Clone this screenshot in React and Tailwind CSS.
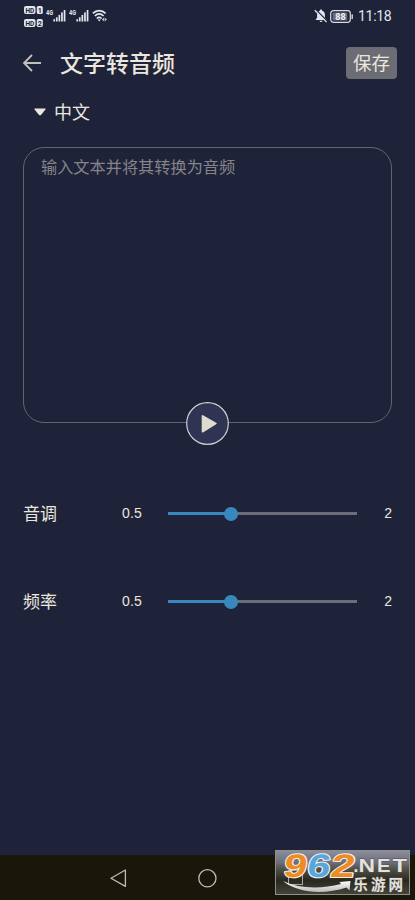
import React from 'react';

const SimSignal = () => (
  <svg width="21" height="14" viewBox="0 0 21 14" fill="#e4e6ee">
    <text x="0" y="6" fontSize="7" fontWeight="700" fontFamily="Roboto, sans-serif" textLength="7" lengthAdjust="spacingAndGlyphs">4G</text>
    <rect x="7.4" y="10.2" width="1.6" height="2.3" />
    <rect x="9.9" y="8.3" width="1.7" height="4.2" />
    <rect x="12.5" y="5.9" width="1.7" height="6.6" />
    <rect x="15.1" y="3.4" width="1.7" height="9.1" />
    <rect x="17.7" y="1" width="1.7" height="11.5" />
  </svg>
);

const HdBadge = ({ sim }) => (
  <svg width="20" height="8" viewBox="0 0 20 8">
    <rect x="0" y="0" width="11.5" height="8" rx="2" fill="#e4e6ee" />
    <rect x="12.8" y="0" width="6" height="8" rx="1.6" fill="#e4e6ee" />
    <text x="1.4" y="6.6" fontSize="7.2" fontWeight="700" fontFamily="Roboto, sans-serif" fill="#1f2339" textLength="8.8" lengthAdjust="spacingAndGlyphs">HD</text>
    <text x="15.8" y="6.6" fontSize="7.2" fontWeight="700" fontFamily="Roboto, sans-serif" fill="#1f2339" textAnchor="middle">{sim}</text>
  </svg>
);

const WifiIcon = () => (
  <svg width="16" height="14" viewBox="0 0 16 14" fill="none" stroke="#e4e6ee" strokeWidth="1.7">
    <path d="M0.8 4.3C4.6 0.6 9.8 0.6 13.6 4.3" />
    <path d="M2.8 7C5.5 4.4 8.9 4.4 11.6 7" />
    <path d="M4.8 9.5C6.4 8 8 8 9.6 9.5" />
    <path d="M5.6 10.6L7.2 12.6L8.8 10.6Z" fill="#e4e6ee" stroke="none" />
    <path d="M12.1 8.6L9.8 10.5L12.1 12.4ZM12.7 8.6L15 10.5L12.7 12.4Z" fill="#b9bcc9" stroke="none" />
  </svg>
);

const BellOffIcon = () => (
  <svg width="14" height="14" viewBox="0 0 14 14">
    <path d="M7 0.6C7.7 0.6 8.1 1 8.1 1.7C10 2.2 10.9 3.7 10.9 5.7V8.8L12.3 10.5V11H1.7V10.5L3.1 8.8V5.7C3.1 3.7 4 2.2 5.9 1.7C5.9 1 6.3 0.6 7 0.6Z" fill="#e4e6ee" />
    <path d="M5.6 11.8H8.4C8.2 13.5 5.8 13.5 5.6 11.8Z" fill="#e4e6ee" />
    <path d="M1.8 0.7L13.3 12.2" stroke="#1f2339" strokeWidth="1.5" />
    <path d="M0.8 1.3L12.6 13.1" stroke="#e4e6ee" strokeWidth="1.3" />
  </svg>
);

const BatteryIcon = () => (
  <svg width="24" height="13" viewBox="0 0 24 13">
    <rect x="0.7" y="0.7" width="19.6" height="11.6" rx="2.8" fill="none" stroke="#d9dbe3" strokeWidth="1.2" />
    <rect x="2.6" y="2.4" width="14.6" height="8.2" rx="0.8" fill="#6b6e80" />
    <rect x="21.5" y="4.2" width="1.4" height="4.8" rx="0.6" fill="#d9dbe3" />
    <text x="10.4" y="9.8" fontSize="9" fontWeight="700" fontFamily="Roboto, sans-serif" fill="#f1f2f6" textAnchor="middle">88</text>
  </svg>
);

const StatusBar = () => (
  <div className="flex h-8 shrink-0 items-center justify-between pl-[24px] pr-[23px]">
    <div className="flex items-center">
      <div className="flex w-[22px] flex-col gap-[5px]">
        <HdBadge sim="1" />
        <HdBadge sim="2" />
      </div>
      <div className="flex items-center gap-[2px]">
        <SimSignal />
        <SimSignal />
        <WifiIcon />
      </div>
    </div>
    <div className="flex items-center">
      <BellOffIcon />
      <div className="ml-[2px]">
        <BatteryIcon />
      </div>
      <span className="ml-[4px] w-[34px] whitespace-nowrap font-['Roboto',sans-serif] text-[14px] leading-none tracking-[-0.3px] text-[#e4e6ee]">11:18</span>
    </div>
  </div>
);

const SliderRow = ({ label, min, max, percent }) => (
  <div className="flex h-[30px] items-center">
    <span className="w-[99px] pb-[2px] text-[17px] leading-none">{label}</span>
    <span className="w-[46px] font-['Liberation_Sans',sans-serif] text-[14px] leading-none tracking-[0.2px]">{min}</span>
    <div className="relative mt-px h-[3px] w-[189px] bg-[#6d6c78]">
      <div className="h-full bg-[#3888bd]" style={{ width: `${percent}%` }}></div>
      <div
        className="absolute top-1/2 size-[14px] -translate-x-1/2 -translate-y-1/2 rounded-full bg-[#3888bd]"
        style={{ left: `${percent}%` }}
      ></div>
    </div>
    <span className="flex-1 text-right font-['Liberation_Sans',sans-serif] text-[14px] leading-none">{max}</span>
  </div>
);

const SiteBadge = () => (
  <svg className="absolute right-[5px] bottom-[5px] overflow-visible" width="135" height="45" viewBox="0 0 135 45">
    <defs>
      <linearGradient id="badgeBg" x1="0" y1="0" x2="0" y2="1">
        <stop offset="0" stopColor="#8d8fa0" />
        <stop offset="0.28" stopColor="#6b6d7b" />
        <stop offset="0.4" stopColor="#55544d" />
        <stop offset="0.68" stopColor="#2a281e" />
        <stop offset="1" stopColor="#45443c" />
      </linearGradient>
      <linearGradient id="smile" x1="0" y1="0" x2="0" y2="1">
        <stop offset="0" stopColor="#ffffff" />
        <stop offset="1" stopColor="#b9b9b7" />
      </linearGradient>
    </defs>
    <rect x="0.5" y="0.5" width="134" height="44" fill="url(#badgeBg)" stroke="#8f9088" />
    <rect x="13.5" y="20.5" width="14" height="14" fill="none" stroke="#aaa69b" />
    <g transform="translate(0 27) skewX(-9)" fontFamily="'Liberation Sans', sans-serif" fontWeight="700" fontSize="32.5" stroke="#f4f1ec" strokeWidth="2" strokeLinejoin="round" paintOrder="stroke">
      <text x="7.5" y="0" fill="#ee8b22" textLength="23" lengthAdjust="spacingAndGlyphs">9</text>
      <text x="31" y="0" fill="#58a7dc" textLength="23" lengthAdjust="spacingAndGlyphs">6</text>
      <text x="54.5" y="0" fill="#ee8b22" textLength="24" lengthAdjust="spacingAndGlyphs">2</text>
    </g>
    <path d="M8 31C25 39 46 39 66 34L64.5 32L75.5 31L74.5 40.5L71.5 37.5C50 44.5 24 44 8 31Z" fill="url(#smile)" />
    <g fill="#e3e2df" stroke="#55534c" strokeWidth="0.8" paintOrder="stroke">
      <g fontFamily="'Liberation Sans', sans-serif" fontWeight="700" fontSize="17.5">
        <text x="78.5" y="22.3">.</text>
        <text x="83.5" y="22.3" textLength="16.5" lengthAdjust="spacingAndGlyphs">N</text>
        <text x="102" y="22.3" textLength="13.5" lengthAdjust="spacingAndGlyphs">E</text>
        <text x="117.5" y="22.3" textLength="14.5" lengthAdjust="spacingAndGlyphs">T</text>
      </g>
      <text x="78.3 96 113.5" y="39.8" fontFamily="'Noto Sans CJK SC', sans-serif" fontWeight="700" fontSize="14.5">乐游网</text>
    </g>
  </svg>
);

const NavBar = () => (
  <div className="relative flex h-[45px] shrink-0 items-center bg-[#1a170a] pl-[109px]">
    <svg width="18" height="20" viewBox="0 0 18 20" fill="none" stroke="#bdbbb3" strokeWidth="1.3" strokeLinejoin="round">
      <path d="M2 10.2L16.4 2V18.4Z" />
    </svg>
    <svg className="ml-[70px]" width="20" height="20" viewBox="0 0 20 20" fill="none" stroke="#bdbbb3" strokeWidth="1.3">
      <circle cx="10.4" cy="10.3" r="8.6" />
    </svg>
    <SiteBadge />
  </div>
);

export default function App() {
  return (
    <div className="flex h-[900px] w-[415px] flex-col overflow-hidden bg-[#1f2339] font-['Noto_Sans_CJK_SC',sans-serif] text-[#ebe7de]">
      <StatusBar />

      <header className="flex h-[62px] shrink-0 items-center pl-[22px] pr-[18px]">
        <svg width="20" height="18" viewBox="0 0 20 18" fill="none" stroke="#c2c0bd" strokeWidth="1.8">
          <path d="M19 9H2M10 1L2 9L10 17" />
        </svg>
        <h1 className="ml-[18px] pb-[2px] text-[23px] leading-none font-medium">文字转音频</h1>
        <button className="ml-auto h-8 w-[51px] rounded-[4px] bg-[#6c6c75] pb-[2px] text-[18.5px] leading-none">保存</button>
      </header>

      <div className="flex h-[36px] shrink-0 items-center pl-[34px]">
        <svg width="12" height="8" viewBox="0 0 12 8" fill="#ebe7de">
          <path d="M0.8 0.6H11.2Q12 0.6 11.4 1.5L7 6.9Q6 7.8 5 6.9L0.6 1.5Q0 0.6 0.8 0.6Z" />
        </svg>
        <span className="ml-[8px] pb-[2px] text-[18px] leading-none">中文</span>
      </div>

      <main className="flex flex-1 flex-col px-[23px] pt-[17px]">
        <div className="relative h-[276px] w-[369px] shrink-0 rounded-[21px] border border-[#65636f] px-[17px] pt-[9px]">
          <p className="text-[16.2px] leading-[18px] text-[#85848a]">输入文本并将其转换为音频</p>
          <button className="absolute -bottom-[23px] left-[162px] size-[43px]">
            <svg width="43" height="43" viewBox="0 0 43 43">
              <circle cx="21.5" cy="21.5" r="20.8" fill="#2f3453" stroke="#d0cfd0" strokeWidth="1.2" />
              <path d="M17 13.2L30.2 20.7Q31.6 21.5 30.2 22.3L17.4 30.3Q15.7 31 15.7 29.4V13.9Q15.7 12.4 17 13.2Z" fill="#dfdccb" />
            </svg>
          </button>
        </div>

        <div className="mt-[75px] flex flex-col gap-[58px]">
          <SliderRow label="音调" min="0.5" max="2" percent={33.3} />
          <SliderRow label="频率" min="0.5" max="2" percent={33.3} />
        </div>
      </main>

      <NavBar />
    </div>
  );
}
